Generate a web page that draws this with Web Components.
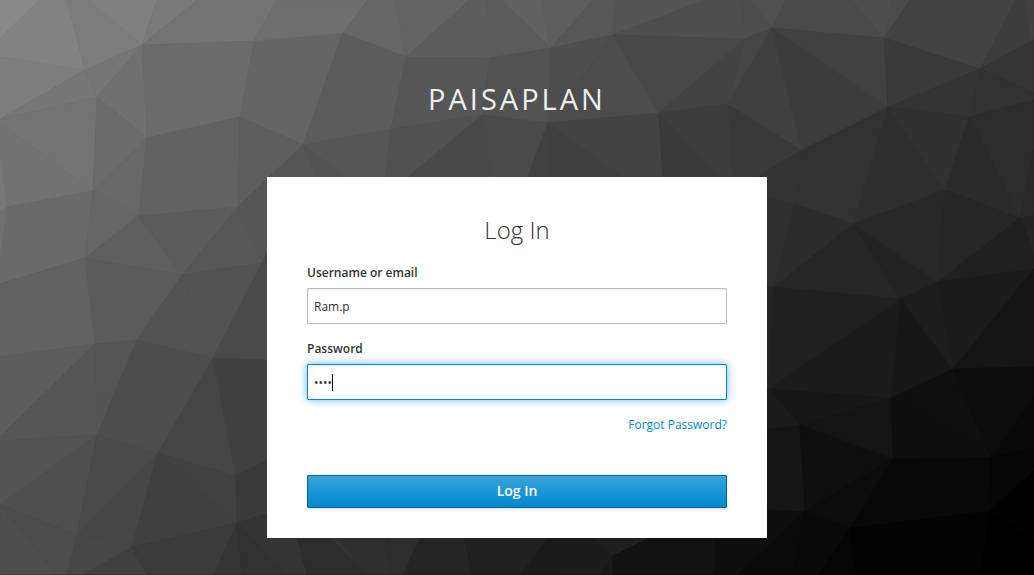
<!DOCTYPE html>
<html lang="en">
<head>
<meta charset="utf-8">
<title>Log in to Paisaplan</title>
<style>
html, body { margin: 0; height: 100%; overflow: hidden; background: #333; }
body { font: 12px "Open Sans", "Noto Sans", sans-serif; color: #333; }
</style>
</head>
<body>
<login-page>
  <brand-title slot="brand">PAISAPLAN</brand-title>
  <login-card>
    <span slot="heading">Log In</span>
    <form-field label="Username or email">Ram.p</form-field>
    <form-field label="Password" focused>••••</form-field>
    <text-link>Forgot Password?</text-link>
    <submit-button>Log In</submit-button>
  </login-card>
</login-page>
<script>
// Facets of the backdrop: grey level, then the corner points.
const FACETS = [
[136,'0,0 40,0 0,38'],[130,'40,0 67,0 85,70 0,57 0,38'],[124,'67,0 88,0 142,45 85,70'],[128,'88,0 157,0 142,45'],
[122,'157,0 198,0 142,45'],[115,'198,0 277,0 254,41 142,45'],[126,'0,57 85,70 0,119'],[119,'85,70 97,97 0,119'],
[117,'85,70 142,45 97,97'],[112,'142,45 147,138 97,97'],[115,'0,119 97,97 93,191 0,124'],[114,'0,124 93,191 7,207 0,150'],
[119,'0,150 7,207 0,212'],[107,'97,97 147,138 93,191'],[107,'142,45 254,41 240,117 147,138'],[101,'254,41 343,33 303,145 240,117'],
[110,'277,0 368,0 343,33 254,41'],[103,'147,138 139,216 93,191'],[98,'147,138 240,117 238,207 139,216'],[94,'240,117 303,145 238,207'],
[106,'7,207 93,191 85,258 0,284 0,258'],[112,'0,212 7,207 0,258'],[102,'93,191 139,216 85,258'],[95,'139,216 182,275 85,258'],
[92,'139,216 238,207 182,275'],[98,'0,284 85,258 95,344 0,357'],[91,'85,258 182,275 137,340 95,344'],[87,'238,207 262,263 182,275'],
[86,'238,207 303,145 303,270 262,263'],[82,'182,275 262,263 213,358'],[82,'182,275 213,358 137,340'],[74,'262,263 290,200 290,365 213,358'],
[93,'0,357 95,344 0,437'],[86,'95,344 97,435 0,441 0,437'],[85,'95,344 137,340 97,435'],[77,'137,340 158,453 97,435'],
[77,'137,340 213,358 158,453'],[69,'213,358 236,476 158,453'],[64,'213,358 290,361 290,450 236,476'],[83,'0,441 97,435 0,505'],
[79,'97,435 77,535 0,505'],[74,'97,435 158,453 77,535'],[76,'0,505 77,535 67,575 56,575'],[78,'0,505 56,575 0,575'],
[70,'158,453 132,547 77,535'],[64,'158,453 237,523 132,547'],[65,'158,453 236,476 237,523'],[58,'236,476 290,450 290,507 237,523'],
[71,'77,535 132,547 83,575 67,575'],[64,'132,547 147,575 83,575'],[59,'132,547 237,523 214,575 147,575'],[53,'237,523 242,575 214,575'],
[50,'237,523 288,575 242,575'],[52,'237,523 290,507 307,575 288,575'],
[45,'290,507 330,538 368,575 307,575'],[47,'330,530 386,530 390,575 368,575'],[46,'386,530 424,530 403,575 390,575'],
[37,'424,530 462,530 473,575 403,575'],[32,'462,530 555,530 520,575 473,575'],[27,'555,530 563,545 560,575 520,575'],
[28,'555,530 587,530 613,556 600,575 560,575 563,545'],[31,'587,530 666,530 613,556'],[25,'613,556 613,575 600,575'],
[18,'613,556 666,530 716,530 715,575 613,575'],[14,'716,530 767,509 805,511 738,575 715,575'],
[102,'368,0 395,0 406,57 343,33'],[100,'395,0 470,0 406,57'],[93,'470,0 487,0 490,58 406,57'],[91,'487,0 502,0 551,48 490,58'],
[92,'343,33 303,145 391,129'],[93,'343,33 406,57 391,129'],[86,'406,57 490,58 482,115 391,129'],[86,'303,145 391,129 384,190 260,190'],
[83,'303,145 347,177 316,177'],[81,'391,129 482,115 400,184 384,184'],[73,'482,115 494,184 400,184'],
[82,'490,58 551,48 548,123 482,115'],[97,'502,0 541,0 551,48'],[94,'541,0 593,0 551,48'],[87,'593,0 616,0 613,35 551,48'],
[84,'616,0 706,0 613,35'],[78,'706,0 742,0 745,39 613,35'],[77,'742,0 750,0 772,28 745,39'],[80,'750,0 786,0 772,28'],
[78,'551,48 613,35 548,123'],[76,'613,35 659,113 548,123'],[72,'613,35 745,39 659,113'],[67,'745,39 728,104 659,113'],
[69,'745,39 772,28 728,104'],[74,'482,115 548,123 525,184 494,184'],[65,'548,123 551,184 525,184'],[64,'548,123 634,184 551,184'],
[67,'548,123 659,113 663,184 634,184'],[58,'659,113 728,184 663,184'],[61,'659,113 728,104 733,184 728,184'],[57,'728,104 802,150 740,187 733,184'],
[74,'786,0 852,0 884,38 772,28'],[77,'852,0 893,0 884,38'],[75,'893,0 910,0 884,38'],[64,'772,28 802,150 728,104'],
[60,'772,28 888,107 802,150'],[65,'772,28 884,38 888,107'],[66,'910,0 1016,0 980,69 884,38'],[61,'1016,0 1025,0 1031,41 980,69'],
[65,'1025,0 1034,0 1034,40 1031,41'],[58,'884,38 980,69 888,107'],[53,'980,69 1031,41 1034,40 1034,93'],[50,'980,69 1034,93 1034,100 969,117'],
[52,'888,107 980,69 969,117'],[51,'802,150 795,204 764,196 740,187'],[50,'802,150 853,224 795,204'],[50,'802,150 888,107 853,224'],
[46,'888,107 945,190 853,224'],[49,'888,107 969,117 945,190'],[43,'969,117 1020,218 945,190'],[45,'969,117 1034,100 1034,150 1020,218'],
[42,'1034,150 1034,216 1020,218'],[47,'764,196 795,204 774,287 764,286'],[44,'795,204 853,224 774,287'],[38,'853,224 901,299 774,287'],
[35,'853,224 938,282 901,299'],[40,'853,224 945,190 938,282'],[38,'945,190 1020,218 938,282'],[36,'1020,218 1034,216 1034,255'],
[32,'1020,218 1034,255 1034,269 938,282'],[35,'764,286 774,287 769,389 764,389'],[32,'774,287 901,299 769,389'],[27,'901,299 891,398 769,389'],
[23,'901,299 953,369 891,398'],[29,'901,299 938,282 953,369'],[27,'938,282 1034,269 953,369'],[21,'1034,269 1034,367 953,369'],
[27,'764,389 769,389 800,425 764,430'],[23,'769,389 891,398 800,425'],[15,'953,369 991,458 891,398'],[12,'953,369 1034,367 1034,396 991,458'],
[20,'891,398 893,459 800,425'],[14,'891,398 991,458 893,459'],[9,'1034,396 1034,448 991,458'],[21,'764,430 800,425 805,511 764,509'],
[15,'800,425 893,459 805,511'],[12,'893,459 850,528 805,511'],[8,'893,459 990,511 850,528'],[8,'893,459 991,458 990,511'],
[6,'991,458 1034,448 1034,471 990,511'],[2,'1034,471 1034,541 990,511'],[10,'805,511 794,575 738,575'],[9,'805,511 850,528 818,575 794,575'],
[5,'850,528 856,575 818,575'],[3,'850,528 950,575 856,575'],[3,'850,528 990,511 980,575 950,575'],[0,'990,511 1034,541 1034,575 980,575']
];

class PolyBackdrop extends HTMLElement {
  constructor() {
    super();
    this.attachShadow({mode: 'open'}).innerHTML = `
      <style>
        :host { display: block; width: 1034px; height: 575px; }
        svg { display: block; }
        polygon { stroke-width: .7; stroke-linejoin: round; }
      </style>
      <svg width="1034" height="575" viewBox="0 0 1034 575" aria-hidden="true">
        ${FACETS.map(([g, p]) => `<polygon points="${p}" fill="rgb(${g},${g},${g})" stroke="rgb(${g},${g},${g})"/>`).join('')}
        <rect y="574" width="1034" height="1" fill="#200008" opacity=".2"/>
      </svg>`;
  }
}

class LoginPage extends HTMLElement {
  constructor() {
    super();
    this.attachShadow({mode: 'open'}).innerHTML = `
      <style>
        :host { display: grid; width: 1034px; height: 575px; overflow: hidden; }
        poly-backdrop, main { grid-area: 1 / 1; }
        main { position: relative; display: flex; flex-direction: column; align-items: center; }
        header { height: 177px; box-sizing: border-box; padding-top: 78px; }
      </style>
      <poly-backdrop></poly-backdrop>
      <main><header><slot name="brand"></slot></header><slot></slot></main>`;
  }
}

class BrandTitle extends HTMLElement {
  constructor() {
    super();
    this.attachShadow({mode: 'open'}).innerHTML = `
      <style>
        :host { display: block; font-size: 29px; line-height: 41px; letter-spacing: 3px; color: #eee; white-space: nowrap; }
      </style><slot></slot>`;
  }
}

class LoginCard extends HTMLElement {
  constructor() {
    super();
    this.attachShadow({mode: 'open'}).innerHTML = `
      <style>
        :host { display: flex; flex-direction: column; box-sizing: border-box; width: 500px; height: 361px; padding: 37px 40px 30px; background: #fff; }
        h1 { margin: 0 0 17px; font-size: 24px; font-weight: 300; line-height: 32px; text-align: center; }
      </style>
      <h1><slot name="heading"></slot></h1><slot></slot>`;
  }
}

class FormField extends HTMLElement {
  constructor() {
    super();
    this.attachShadow({mode: 'open'}).innerHTML = `
      <style>
        :host { display: block; margin-bottom: 15px; }
        label { display: block; height: 20px; margin-bottom: 5px; line-height: 20px; font-weight: 600; }
        .box { display: flex; align-items: center; box-sizing: border-box; height: 36px; padding: 0 6px; border: 1px solid #bbb; border-radius: 1px; background: #fff; box-shadow: inset 0 1px 1px rgba(3,3,3,.075); }
        :host([focused]) .box { border-color: #0088ce; box-shadow: inset 0 1px 1px rgba(3,3,3,.075), 0 0 8px rgba(0,136,206,.6); }
        .caret { display: none; width: 1px; height: 17px; background: #000; }
        :host([focused]) .caret { display: block; }
      </style>
      <label></label>
      <div class="box"><slot></slot><span class="caret"></span></div>`;
  }
  connectedCallback() {
    this.shadowRoot.querySelector('label').textContent = this.getAttribute('label');
  }
}

class TextLink extends HTMLElement {
  constructor() {
    super();
    this.attachShadow({mode: 'open'}).innerHTML = `
      <style>
        :host { display: block; text-align: right; line-height: 20px; }
        a { color: #0088ce; text-decoration: none; }
      </style><a href="#"><slot></slot></a>`;
  }
}

class SubmitButton extends HTMLElement {
  constructor() {
    super();
    this.attachShadow({mode: 'open'}).innerHTML = `
      <style>
        :host { display: block; margin-top: auto; }
        button { display: block; box-sizing: border-box; width: 100%; height: 33px; margin: 0; padding: 0 0 1px; border: 1px solid #00659c; border-radius: 1px; background: linear-gradient(#39a5dc, #0088ce); box-shadow: 0 2px 3px rgba(3,3,3,.1); color: #fff; font: 600 14px/30px "Open Sans", sans-serif; }
      </style><button type="button"><slot></slot></button>`;
  }
}

customElements.define('poly-backdrop', PolyBackdrop);
customElements.define('login-page', LoginPage);
customElements.define('brand-title', BrandTitle);
customElements.define('login-card', LoginCard);
customElements.define('form-field', FormField);
customElements.define('text-link', TextLink);
customElements.define('submit-button', SubmitButton);
</script>
</body>
</html>
